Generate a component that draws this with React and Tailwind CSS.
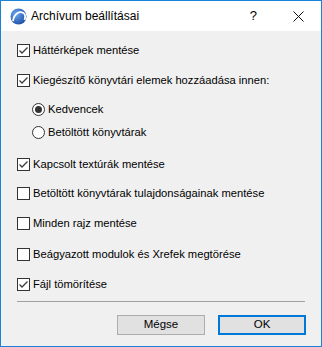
import React, { useState } from 'react'

const font = { fontFamily: '"Segoe UI", "Liberation Sans", Arial, sans-serif' }

function CheckBox({ checked, label, onToggle, className }) {
  return (
    <label className={`flex items-center h-[16px] pl-[16px] cursor-default ${className}`} onClick={onToggle}>
      <span className="w-[13px] h-[13px] border border-[#333333] bg-white flex items-center justify-center shrink-0">
        {checked && (
          <svg width="11" height="11" viewBox="0 0 11 11">
            <path d="M1.5 5.5 L4 8 L9.5 2.5" fill="none" stroke="#3c3c3c" strokeWidth="1.3" />
          </svg>
        )}
      </span>
      <span className="ml-[3px] text-[11.2px] leading-[16px] text-black whitespace-nowrap">{label}</span>
    </label>
  )
}

function Radio({ checked, label, onSelect, className }) {
  return (
    <label className={`flex items-center h-[16px] pl-[31px] cursor-default ${className}`} onClick={onSelect}>
      <span className="w-[13px] h-[13px] rounded-full border border-[#333333] bg-white flex items-center justify-center shrink-0">
        {checked && <span className="w-[7px] h-[7px] rounded-full bg-[#333333]" />}
      </span>
      <span className="ml-[3px] text-[11.2px] leading-[16px] text-black whitespace-nowrap">{label}</span>
    </label>
  )
}

export default function App() {
  const [opts, setOpts] = useState({
    hatter: true,
    kieg: true,
    kapcs: true,
    tulaj: false,
    rajz: false,
    modul: false,
    tomor: true
  })
  const [source, setSource] = useState('kedvencek')

  const toggle = (key) => setOpts(prev => ({ ...prev, [key]: !prev[key] }))

  return (
    <div className="w-[322px] h-[347px] border border-[#1883d7] bg-[#f0f0f0] flex flex-col" style={font}>
      {/* címsor */}
      <div className="h-[30px] bg-white flex items-center shrink-0">
        <svg className="ml-[9px]" width="17" height="17" viewBox="0 0 17 17">
          <defs>
            <radialGradient id="lg" cx="0.35" cy="0.35" r="0.7">
              <stop offset="0" stopColor="#6aa8ec" />
              <stop offset="1" stopColor="#1f4fa8" />
            </radialGradient>
          </defs>
          <circle cx="8.5" cy="8.5" r="8" fill="url(#lg)" />
          <path d="M3 13 C4 6 9 2.5 13.5 5 C15 6 15.5 9 14.5 12" fill="none" stroke="white" strokeWidth="1.8" />
        </svg>
        <span className="ml-[4px] text-[12px] text-black">Archívum beállításai</span>
        <span className="ml-auto mr-[36px] text-[13px] text-black">?</span>
        <svg className="mr-[17px]" width="11" height="11" viewBox="0 0 11 11">
          <path d="M0.5 0.5 L10.5 10.5 M10.5 0.5 L0.5 10.5" stroke="#111" strokeWidth="1" />
        </svg>
      </div>

      <div className="flex flex-col pt-[11px]">
        <CheckBox checked={opts.hatter} label="Háttérképek mentése" onToggle={() => toggle('hatter')} />
        <CheckBox className="mt-[14px]" checked={opts.kieg} label="Kiegészítő könyvtári elemek hozzáadása innen:" onToggle={() => toggle('kieg')} />
        <Radio className="mt-[13px]" checked={source === 'kedvencek'} label="Kedvencek" onSelect={() => setSource('kedvencek')} />
        <Radio className="mt-[7px]" checked={source === 'betoltott'} label="Betöltött könyvtárak" onSelect={() => setSource('betoltott')} />
        <CheckBox className="mt-[16px]" checked={opts.kapcs} label="Kapcsolt textúrák mentése" onToggle={() => toggle('kapcs')} />
        <CheckBox className="mt-[13px]" checked={opts.tulaj} label="Betöltött könyvtárak tulajdonságainak mentése" onToggle={() => toggle('tulaj')} />
        <CheckBox className="mt-[14px]" checked={opts.rajz} label="Minden rajz mentése" onToggle={() => toggle('rajz')} />
        <CheckBox className="mt-[15px]" checked={opts.modul} label="Beágyazott modulok és Xrefek megtörése" onToggle={() => toggle('modul')} />
        <CheckBox className="mt-[14px]" checked={opts.tomor} label="Fájl tömörítése" onToggle={() => toggle('tomor')} />
      </div>

      <div className="mt-[9px] mx-[16px] h-px bg-[#a0a0a0]" />

      <div className="flex justify-end gap-[13px] mt-[13px] pr-[15px]">
        <button className="w-[88px] h-[20px] border border-[#adadad] bg-[#e1e1e1] text-[11.5px] text-black leading-none">Mégse</button>
        <button className="w-[88px] h-[20px] border-2 border-[#0078d7] bg-[#e1e1e1] text-[11.5px] text-black leading-none">OK</button>
      </div>
    </div>
  )
}
